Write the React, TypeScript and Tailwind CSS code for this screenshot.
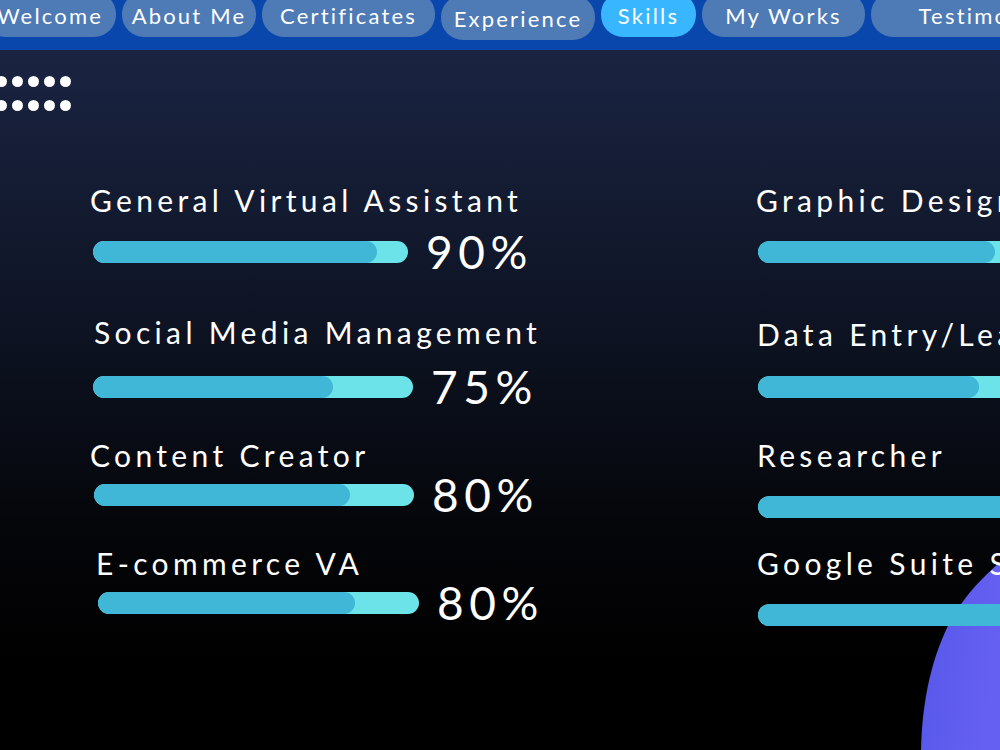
import React from "react";

type Skill = {
  name: string;
  value: number;
  ml: number;
  barW: number;
  labelMl: number;
  labelTop: number;
  barTop: number;
};

const leftSkills: Skill[] = [
  { name: "General Virtual Assistant", value: 90, ml: 93, barW: 315, labelMl: 90, labelTop: 185, barTop: 241 },
  { name: "Social Media Management", value: 75, ml: 93, barW: 320, labelMl: 94, labelTop: 317, barTop: 376 },
  { name: "Content Creator", value: 80, ml: 94, barW: 320, labelMl: 90, labelTop: 440, barTop: 484 },
  { name: "E-commerce VA", value: 80, ml: 98, barW: 321, labelMl: 96, labelTop: 548, barTop: 592 },
];

const rightSkills: Skill[] = [
  { name: "Graphic Design", value: 74, ml: 758, barW: 320, labelMl: 756, labelTop: 185, barTop: 241 },
  { name: "Data Entry/Lead Generation", value: 69, ml: 758, barW: 320, labelMl: 757, labelTop: 319, barTop: 376 },
  { name: "Researcher", value: 85, ml: 758, barW: 320, labelMl: 757, labelTop: 440, barTop: 496 },
  { name: "Google Suite Specialist", value: 85, ml: 758, barW: 320, labelMl: 757, labelTop: 548, barTop: 604 },
];

const tabs = [
  { label: "Welcome", w: "w-[132px]", active: false, low: false },
  { label: "About Me", w: "w-[134px]", active: false, low: false },
  { label: "Certificates", w: "w-[173px]", active: false, low: false },
  { label: "Experience", w: "w-[154px]", active: false, low: true },
  { label: "Skills", w: "w-[95px]", active: true, low: false },
  { label: "My Works", w: "w-[163px]", active: false, low: false },
  { label: "Testimonials", w: "w-[240px]", active: false, low: false },
];

const font = { fontFamily: "Lato, 'Open Sans', sans-serif" };

function SkillRow({ skill }: { skill: Skill }) {
  return (
    <div className="absolute left-0 w-[1000px]" style={{ top: skill.labelTop }}>
      <div
        className="h-[30px] text-white text-[30px] leading-[30px] tracking-[0.145em] whitespace-nowrap"
        style={{ marginLeft: skill.labelMl }}
      >
        {skill.name}
      </div>
      {/* bar row keeps the bar's height; the percentage overflows it evenly */}
      <div
        className="h-[22px] flex items-center gap-[18px]"
        style={{ marginLeft: skill.ml, marginTop: skill.barTop - skill.labelTop - 30 }}
      >
        <div
          className="h-[22px] shrink-0 rounded-full bg-[#6be3e8] overflow-hidden"
          style={{ width: skill.barW }}
        >
          <div className="h-full rounded-full bg-[#41b7d7]" style={{ width: `${skill.value}%` }} />
        </div>
        <span className="text-white text-[46px] leading-none tracking-[0.12em] whitespace-nowrap">
          {skill.value}%
        </span>
      </div>
    </div>
  );
}

export default function App() {
  return (
    <div
      className="relative w-[1000px] h-[750px] overflow-hidden bg-[linear-gradient(180deg,#1c2646_0%,#141c33_25%,#0b101d_50%,#040508_72%,#000000_88%)]"
      style={font}
    >
      {/* top navigation */}
      <nav className="relative z-10 h-[50px] bg-[#0a47ad] overflow-hidden">
        <div className="flex gap-[6px] -ml-[16px] -mt-[8px]">
          {tabs.map((t) => (
            <div
              key={t.label}
              className={`${t.w} ${t.low ? "mt-[3px]" : ""} ${
                t.active ? "bg-[#38b6ff]" : "bg-[#4e7ab6]"
              } h-[45px] shrink-0 rounded-[22px] flex items-center justify-center pt-[1px] text-white text-[22px] tracking-[0.1em] whitespace-nowrap`}
            >
              {t.label}
            </div>
          ))}
        </div>
      </nav>

      {/* dot grid */}
      <div className="absolute left-[-4px] top-[76px] grid grid-cols-5 gap-x-[5px] gap-y-[13px]">
        {Array.from({ length: 10 }).map((_, i) => (
          <span key={i} className="block w-[11px] h-[11px] rounded-full bg-white" />
        ))}
      </div>

      {/* purple corner shape */}
      <svg className="absolute right-0 bottom-0" width="90" height="200" viewBox="910 550 90 200">
        <defs>
          <linearGradient id="blob" x1="0" y1="0" x2="1" y2="0.3">
            <stop offset="0" stopColor="#5457e8" />
            <stop offset="1" stopColor="#6660f2" />
          </linearGradient>
        </defs>
        <path d="M921 750 C922 700 932 655 952 618 C966 594 982 578 1000 562 L1000 750 Z" fill="url(#blob)" />
      </svg>

      {leftSkills.map((s) => (
        <SkillRow key={s.name} skill={s} />
      ))}
      {rightSkills.map((s) => (
        <SkillRow key={s.name} skill={s} />
      ))}
    </div>
  );
}
